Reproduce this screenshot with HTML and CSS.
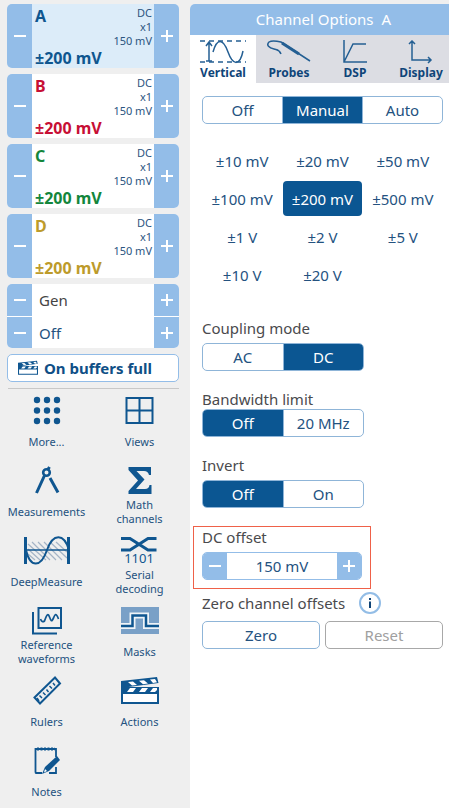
FILE: index.html
```html
<!DOCTYPE html>
<html lang="en">
<head>
<meta charset="utf-8">
<title>Channel Options</title>
<link rel="stylesheet" href="styles.css">
</head>
<body>
<div class="app">
  <aside class="sidebar">
    <section class="channel channel-a active">
      <button class="step" aria-label="Decrease A range"><svg viewBox="0 0 14 14"><path d="M1 7H13"/></svg></button>
      <button class="channel-body"><span class="name">A</span><span class="info">DC<br>x1<br>150 mV</span><span class="range">±200 mV</span></button>
      <button class="step" aria-label="Increase A range"><svg viewBox="0 0 14 14"><path d="M1 7H13M7 1V13"/></svg></button>
    </section>
    <section class="channel channel-b">
      <button class="step" aria-label="Decrease B range"><svg viewBox="0 0 14 14"><path d="M1 7H13"/></svg></button>
      <button class="channel-body"><span class="name">B</span><span class="info">DC<br>x1<br>150 mV</span><span class="range">±200 mV</span></button>
      <button class="step" aria-label="Increase B range"><svg viewBox="0 0 14 14"><path d="M1 7H13M7 1V13"/></svg></button>
    </section>
    <section class="channel channel-c">
      <button class="step" aria-label="Decrease C range"><svg viewBox="0 0 14 14"><path d="M1 7H13"/></svg></button>
      <button class="channel-body"><span class="name">C</span><span class="info">DC<br>x1<br>150 mV</span><span class="range">±200 mV</span></button>
      <button class="step" aria-label="Increase C range"><svg viewBox="0 0 14 14"><path d="M1 7H13M7 1V13"/></svg></button>
    </section>
    <section class="channel channel-d">
      <button class="step" aria-label="Decrease D range"><svg viewBox="0 0 14 14"><path d="M1 7H13"/></svg></button>
      <button class="channel-body"><span class="name">D</span><span class="info">DC<br>x1<br>150 mV</span><span class="range">±200 mV</span></button>
      <button class="step" aria-label="Increase D range"><svg viewBox="0 0 14 14"><path d="M1 7H13M7 1V13"/></svg></button>
    </section>
    <section class="generator">
      <button class="step" aria-label="Previous generator"><svg viewBox="0 0 14 14"><path d="M1 7H13"/></svg></button>
      <button class="gen-value gen-name">Gen</button>
      <button class="step" aria-label="Next generator"><svg viewBox="0 0 14 14"><path d="M1 7H13M7 1V13"/></svg></button>
      <button class="step" aria-label="Previous generator state"><svg viewBox="0 0 14 14"><path d="M1 7H13"/></svg></button>
      <button class="gen-value">Off</button>
      <button class="step" aria-label="Next generator state"><svg viewBox="0 0 14 14"><path d="M1 7H13M7 1V13"/></svg></button>
    </section>
    <button class="buffers">
      <svg class="clap-small" viewBox="0 0 38 28"><use href="#clapper"/></svg>
      On buffers full
    </button>
    <nav class="tools">
      <button class="tool">
        <svg class="icon" viewBox="0 0 48 30"><g fill="#0f5690"><circle cx="14" cy="4" r="3.2"/><circle cx="24" cy="4" r="3.2"/><circle cx="34" cy="4" r="3.2"/><circle cx="14" cy="14.5" r="3.2"/><circle cx="24" cy="14.5" r="3.2"/><circle cx="34" cy="14.5" r="3.2"/><circle cx="14" cy="25" r="3.2"/><circle cx="24" cy="25" r="3.2"/><circle cx="34" cy="25" r="3.2"/></g></svg>
        <span class="tool-label">More...</span>
      </button>
      <button class="tool">
        <svg class="icon line" viewBox="0 0 48 30"><path d="M10.500 2H36.500V27H10.500ZM23.500 2V27M10.500 14.500H36.500"/></svg>
        <span class="tool-label">Views</span>
      </button>
      <button class="tool">
        <svg class="icon" viewBox="0 0 48 30"><g fill="none" stroke="#0f5690"><circle cx="23.500" cy="6.500" r="3.300" stroke-width="2.600"/><path stroke-width="3" d="M24.500 4L26.500 1M21.500 9.500L13.500 27M27 12L35 26.500"/></g></svg>
        <span class="tool-label">Measurements</span>
      </button>
      <button class="tool">
        <svg class="icon" viewBox="0 0 48 30"><path fill="#0f5690" d="M12.500 1H35V9H33Q32 5 28 5H20.500L28.500 13.500L20 23H29Q33 23 33.500 19H35.500V28H12.500V25L22 14.500L12.500 4Z"/></svg>
        <span class="tool-label">Math channels</span>
      </button>
      <button class="tool">
        <svg class="icon" viewBox="0 0 48 30"><g stroke="#a5b4c6" stroke-width="1.200"><path d="M5 8L23 24M5 13L17 24M9 6L27 24M15 6L33 24M21 6L39 24M27 6L44 22M33 6L44 16M5 18L12 24"/></g><g fill="none" stroke="#0f5690"><path stroke-width="3" d="M2.500 1V28M45.500 1V28"/><path stroke-width="1.500" d="M3 14H46"/><path stroke-width="2" d="M3 14C7 32 18 32 24 14C30 -3 41 -3 46 14"/></g></svg>
        <span class="tool-label">DeepMeasure</span>
      </button>
      <button class="tool">
        <svg class="icon" viewBox="0 0 48 30"><path fill="none" stroke="#0f5690" stroke-width="3" d="M5 2.500H14L32 14H40.500M5 14H14L32 2.500H40.500"/><text x="23" y="27" text-anchor="middle" font-size="13" fill="#0f5690">1101</text></svg>
        <span class="tool-label">Serial decoding</span>
      </button>
      <button class="tool">
        <svg class="icon line" viewBox="0 0 48 30"><path d="M15.500 2H38V22H15.500ZM10 6V27.500H34"/><path stroke-width="1.700" d="M17.500 13Q19 17 21.500 15C24 8 25 7 26.500 11S28.500 16 30 13S32.500 5 35.500 13"/></svg>
        <span class="tool-label">Reference waveforms</span>
      </button>
      <button class="tool">
        <svg class="icon" viewBox="0 0 48 30"><path fill="#79a0c7" d="M5 1H43V28H5Z"/><path fill="none" stroke="#eef3f8" stroke-width="6" d="M5 20H16.500V9.500H30V20H43"/><path fill="none" stroke="#0f5690" stroke-width="2.500" d="M5 20H16.500V9.500H30V20H43"/></svg>
        <span class="tool-label">Masks</span>
      </button>
      <button class="tool">
        <svg class="icon line" viewBox="0 0 48 30"><path d="M11.500 21.500L32 1.500L37 7.500L17 27.500Z"/><path stroke-width="1.500" d="M16 25L14 22M19 22L16.500 19.500M22.500 19L20 16.500M25.500 16L23.500 13.500M29 12.500L26.500 10M32 9.500L30 7"/></svg>
        <span class="tool-label">Rulers</span>
      </button>
      <button class="tool">
        <svg class="icon" viewBox="-5 -1 48 30"><g id="clapper"><path fill="#fff" stroke="#0f5690" stroke-width="2" d="M1 11H37V26H1Z"/><path fill="#0f5690" d="M0 10H38V17H0ZM0 4L36 0L37.500 6L0 11Z"/><path fill="#fff" d="M6 15L9 11H15L12 15ZM18 15L21 11H27L24 15ZM29 15L32 11H36V13L34 15ZM7 5L12 4.500L16 8L11 8.500ZM18 3.700L23 3.200L27 6.500L22 7.200ZM29 2.500L34 2L36 5.300L32 6Z"/></g></svg>
        <span class="tool-label">Actions</span>
      </button>
      <button class="tool">
        <svg class="icon" viewBox="0 0 48 30"><path fill="none" stroke="#0f5690" stroke-width="1.800" d="M19 27H13Q12.500 27 12.500 26V3H33V11M33 21V27H26"/><path stroke="#0f5690" stroke-width="3" stroke-dasharray="2 1.500" d="M14 3H32"/><path fill="#0f5690" d="M34 10L37 14L26 25L19 28L22 21Z"/><path fill="#fff" d="M22 23L24 25L21 26.500Z"/></svg>
        <span class="tool-label">Notes</span>
      </button>
    </nav>
  </aside>

  <main class="panel">
    <h1 class="title"><span>Channel Options</span><span>A</span></h1>
    <div class="tabs" role="tablist">
      <button class="tab selected" role="tab" aria-selected="true">
        <svg class="tab-icon" viewBox="0 0 46 24"><path stroke-dasharray="5 4" d="M0 1H46M0 22H46"/><path d="M9 21V3M6 6L9 2L12 6M6 21H12M13 12C17 -2 23 -2 28 12S40 26 43 11"/></svg>
        Vertical
      </button>
      <button class="tab" role="tab" aria-selected="false">
        <svg class="tab-icon" viewBox="0 0 46 24"><path d="M15 14C13 9 11 10 8 9C3 8 0 5 3 2C6 0 11 1 15 2L44 21"/><path stroke-width="3" d="M16 3L33 14"/></svg>
        Probes
      </button>
      <button class="tab" role="tab" aria-selected="false">
        <svg class="tab-icon" viewBox="0 0 46 24"><path d="M12 0V22H35M12 22L21 4H34"/></svg>
        DSP
      </button>
      <button class="tab" role="tab" aria-selected="false">
        <svg class="tab-icon" viewBox="0 0 46 24"><path d="M14 1V20H33M11 4L14 1L17 4M30 17L33 20L30 23"/></svg>
        Display
      </button>
    </div>
    <div class="content">
      <div class="segments wide" role="group" aria-label="Range mode">
        <button>Off</button><button class="on" aria-pressed="true">Manual</button><button>Auto</button>
      </div>
      <div class="ranges" role="group" aria-label="Range">
        <button>±10 mV</button><button>±20 mV</button><button>±50 mV</button>
        <button>±100 mV</button><button class="on" aria-pressed="true">±200 mV</button><button>±500 mV</button>
        <button>±1 V</button><button>±2 V</button><button>±5 V</button>
        <button>±10 V</button><button>±20 V</button>
      </div>
      <section class="field">
        <h2>Coupling mode</h2>
        <div class="segments"><button>AC</button><button class="on" aria-pressed="true">DC</button></div>
      </section>
      <section class="field tight">
        <h2>Bandwidth limit</h2>
        <div class="segments"><button class="on" aria-pressed="true">Off</button><button>20 MHz</button></div>
      </section>
      <section class="field">
        <h2>Invert</h2>
        <div class="segments"><button class="on" aria-pressed="true">Off</button><button>On</button></div>
      </section>
      <section class="field highlighted">
        <label for="offset">DC offset</label>
        <div class="stepper">
          <button class="step" aria-label="Decrease offset"><svg viewBox="0 0 14 14"><path d="M1 7H13"/></svg></button>
          <input id="offset" type="text" value="150 mV">
          <button class="step" aria-label="Increase offset"><svg viewBox="0 0 14 14"><path d="M1 7H13M7 1V13"/></svg></button>
        </div>
      </section>
      <section class="zero">
        <div class="zero-head"><h2>Zero channel offsets</h2><button class="help" aria-label="Information"><svg viewBox="0 0 22 22"><circle cx="11" cy="11" r="10" fill="#fff" stroke="#93bde6" stroke-width="2"/><path fill="#0f4477" d="M10 6H12V8H10ZM10 9.500H12V16H10Z"/></svg></button></div>
        <div class="actions"><button>Zero</button><button disabled>Reset</button></div>
      </section>
    </div>
  </main>
</div>
</body>
</html>
```

FILE: styles.css
```css
* { box-sizing: border-box; }

body {
  margin: 0;
  background: #efefef;
  color: #24527f;
  font: 15px/20px "Noto Sans", "Open Sans", sans-serif;
}

button, input {
  margin: 0;
  padding: 0;
  border: 0;
  background: none;
  color: inherit;
  font: inherit;
}

h1, h2 { margin: 0; font: inherit; }
svg { display: block; }

.app { display: flex; min-height: 100vh; padding-top: 4px; }

.sidebar {
  flex: none;
  width: 190px;
}

.channel, .generator {
  display: grid;
  grid-template-columns: 25px 1fr 25px;
  margin: 0 11px 6px 7px;
  border-radius: 5px;
  overflow: hidden;
  background: #fff;
}

.channel { height: 64px; }
.channel.active { background: #dcecf9; }

.step {
  display: flex;
  align-items: center;
  justify-content: center;
  background: #93bde8;
}

.step svg {
  width: 14px;
  height: 14px;
  fill: none;
  stroke: #fff;
  stroke-width: 2;
}

.channel-body {
  display: grid;
  grid-template-columns: auto 1fr;
  grid-template-rows: 44px 20px;
  padding: 0 2px 0 3px;
  text-align: left;
}

.name, .range { font-size: 16px; font-weight: 700; }
.name { padding-top: 2px; }
.info { padding-top: 2px; color: #2c557f; font-size: 11px; line-height: 14px; text-align: right; }
.range { grid-column: 1 / 3; }
.channel-a { color: #0f568f; }
.channel-b { color: #c70f35; }
.channel-c { color: #13863c; }
.channel-d { color: #bd9b2b; }

.generator { grid-template-rows: 32px 31px; row-gap: 1px; }
.gen-value { padding-left: 7px; text-align: left; }
.gen-name { color: #444; }

.buffers {
  display: flex;
  align-items: center;
  gap: 6px;
  width: 172px;
  height: 28px;
  margin-left: 7px;
  padding-left: 10px;
  border: 1px solid #93bde8;
  border-radius: 5px;
  background: #fff;
  color: #0f4f86;
  font-weight: 700;
}

.clap-small { width: 20px; height: 16px; }

.tools {
  display: grid;
  grid-template-columns: 1fr 1fr;
  row-gap: 8px;
  margin-top: 6px;
  padding: 8px 4px 0 0;
  background: linear-gradient(#c8c8c8, #c8c8c8) 8px 0 / 171px 1px no-repeat;
}

.tool { display: flex; flex-direction: column; align-items: center; }
.icon { width: 48px; height: 30px; overflow: visible; }
.line { fill: none; stroke: #0f5690; stroke-width: 2; }

.tool-label {
  display: flex;
  align-items: center;
  width: min-content;
  height: 32px;
  font-size: 11px;
  line-height: 14px;
  text-align: center;
}

.panel { flex: 1; min-width: 0; border-radius: 5px 0 0 0; background: #fff; overflow: hidden; }

.title {
  display: flex;
  justify-content: center;
  gap: 8px;
  padding-left: 8px;
  background: #93bde8;
  color: #fff;
  line-height: 31px;
}

.tabs { display: flex; overflow: hidden; background: #dcdde3; }

.tab {
  display: flex;
  flex: 0 0 66px;
  flex-direction: column;
  align-items: center;
  height: 48px;
  padding-top: 5px;
  color: #0f4579;
  font-size: 12px;
  font-weight: 700;
  line-height: 18px;
}

.tab.selected { background: #fff; }
.tab-icon { width: 46px; height: 24px; fill: none; stroke: #245f93; stroke-width: 1.5; }
.content { padding: 13px 6px 20px 12px; }

.segments {
  display: flex;
  width: 162px;
  height: 28px;
  border: 1px solid #8fb5d8;
  border-radius: 5px;
  overflow: hidden;
}

.segments.wide { width: auto; }
.segments button { flex: 1; }
.segments button + button { border-left: 1px solid #8fb5d8; }
.segments .on, .ranges .on { background: #0b5692; color: #fff; }

.ranges {
  display: grid;
  grid-template-columns: repeat(3, 1fr);
  grid-auto-rows: 35px;
  row-gap: 3px;
  margin-top: 19px;
}

.ranges button { margin: 0 1px; border-radius: 4px; white-space: nowrap; }

.field { margin-top: 18px; }
.field h2, .field label, .zero h2 { display: block; margin-bottom: 5px; color: #4a4a4d; }
.ranges + .field { margin-top: 26px; }
.field.tight h2 { margin-bottom: 0; }

.highlighted {
  width: 178px;
  margin-left: -9px;
  padding: 0 8px 8px;
  border: 1px solid #ef6149;
}

.stepper {
  display: flex;
  height: 28px;
  border: 1px solid #93bde8;
  border-radius: 5px;
  overflow: hidden;
}

.stepper .step { flex: none; width: 24px; }
.stepper input { flex: 1; min-width: 0; text-align: center; }
.zero-head { display: flex; align-items: center; gap: 14px; height: 28px; }
.zero h2 { margin: 0; }
.help svg { width: 22px; height: 22px; }
.actions { display: flex; gap: 5px; margin-top: 4px; }
.actions button { flex: 1; height: 28px; border: 1px solid #8fb5d8; border-radius: 5px; }
.actions button:disabled { border-color: #a8a8a8; color: #a0a0a0; }
```
